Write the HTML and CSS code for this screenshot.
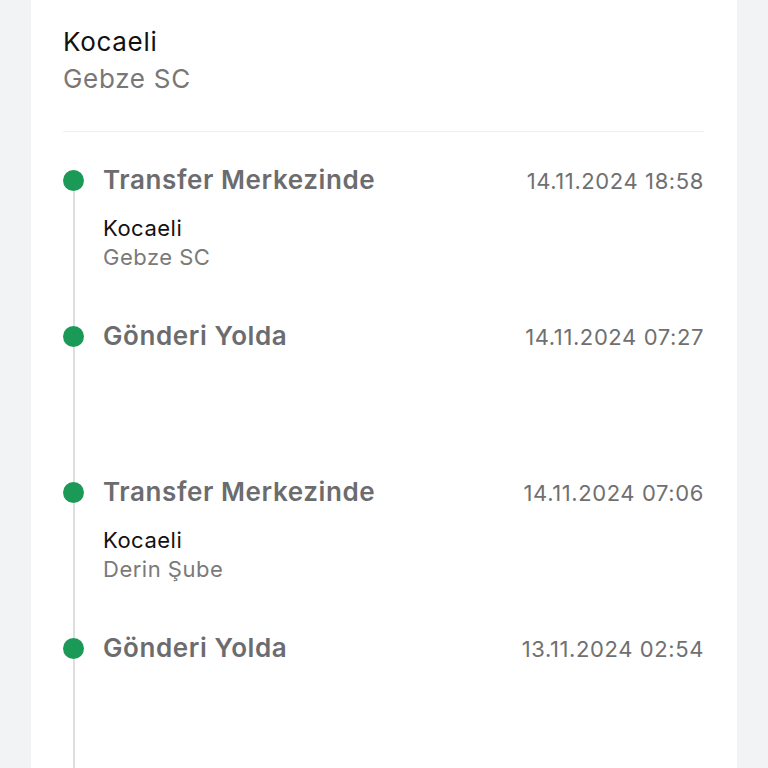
FILE: index.html
```html
<!DOCTYPE html>
<html lang="tr">
<head>
<meta charset="utf-8">
<link rel="stylesheet" href="styles.css">
</head>
<body>
<div class="page">
  <section class="card">
    <div class="header">
      <div class="city">Kocaeli</div>
      <div class="branch">Gebze SC</div>
    </div>
    <hr class="divider">
    <ul class="timeline">
      <li class="item first">
        <div class="marker"><span class="seg-top"></span><span class="dot"></span><span class="seg"></span></div>
        <div class="content">
          <div class="row"><span class="title">Transfer Merkezinde</span><span class="date">14.11.2024 18:58</span></div>
          <div class="sub"><div class="sub-city">Kocaeli</div><div class="sub-branch">Gebze SC</div></div>
        </div>
      </li>
      <li class="item">
        <div class="marker"><span class="seg-top"></span><span class="dot"></span><span class="seg"></span></div>
        <div class="content">
          <div class="row"><span class="title">Gönderi Yolda</span><span class="date">14.11.2024 07:27</span></div>
        </div>
      </li>
      <li class="item">
        <div class="marker"><span class="seg-top"></span><span class="dot"></span><span class="seg"></span></div>
        <div class="content">
          <div class="row"><span class="title">Transfer Merkezinde</span><span class="date">14.11.2024 07:06</span></div>
          <div class="sub"><div class="sub-city">Kocaeli</div><div class="sub-branch">Derin Şube</div></div>
        </div>
      </li>
      <li class="item">
        <div class="marker"><span class="seg-top"></span><span class="dot"></span><span class="seg"></span></div>
        <div class="content">
          <div class="row"><span class="title">Gönderi Yolda</span><span class="date">13.11.2024 02:54</span></div>
        </div>
      </li>
    </ul>
  </section>
</div>
</body>
</html>
```
FILE: styles.css
```css
html, body {
  margin: 0;
  padding: 0;
  background: #f2f3f5;
  font-family: Inter, "Noto Sans", "Liberation Sans", sans-serif;
  height: 768px;
  overflow: hidden;
}
.page {
  padding: 0 31px;
}
.card {
  background: #ffffff;
  padding: 23px 33px 0 32px;
  min-height: 800px;
}
.header .city {
  font-size: 26px;
  line-height: 37px;
  letter-spacing: 0.7px;
  color: #111111;
}
.header .branch {
  font-size: 26px;
  line-height: 37px;
  letter-spacing: 0.7px;
  color: #777777;
}
.divider {
  border: 0;
  height: 1px;
  background: #efefef;
  margin: 34px 0 33px 0;
}
.timeline {
  list-style: none;
  margin: 0;
  padding: 0;
}
.item {
  display: flex;
  height: 156px;
}
.marker {
  width: 40px;
  flex: 0 0 40px;
  display: flex;
  flex-direction: column;
  align-items: flex-start;
}
.seg-top {
  width: 2px;
  height: 4.5px;
  margin-left: 9.5px;
  background: #dedede;
}
.first .seg-top {
  background: transparent;
}
.dot {
  width: 21px;
  height: 21px;
  border-radius: 50%;
  background: #1a9a56;
}
.seg {
  flex: 1;
  width: 2px;
  margin-left: 9.5px;
  background: #dedede;
}
.content {
  flex: 1;
}
.row {
  display: flex;
  justify-content: space-between;
  align-items: baseline;
}
.title {
  font-size: 26px;
  line-height: 30px;
  letter-spacing: 0.6px;
  font-weight: 600;
  color: #6c6c6e;
}
.date {
  font-size: 22px;
  letter-spacing: 0.6px;
  color: #707070;
}
.sub {
  margin-top: 19px;
}
.sub-city {
  font-size: 22px;
  line-height: 29px;
  letter-spacing: 0.5px;
  color: #111111;
}
.sub-branch {
  font-size: 22px;
  line-height: 29px;
  letter-spacing: 0.5px;
  color: #7a7a7a;
}
```
